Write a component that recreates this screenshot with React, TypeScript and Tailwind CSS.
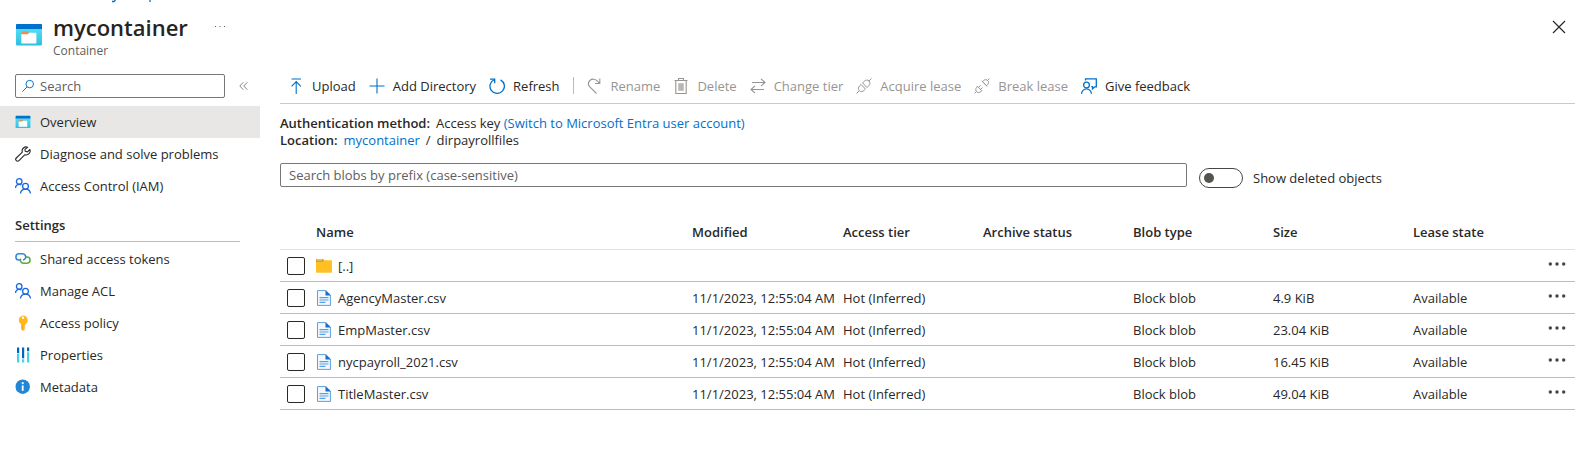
import type { ReactNode } from "react";

type IconProps = { className?: string };

const line = {
  fill: "none",
  stroke: "currentColor",
  strokeWidth: 1.1,
  viewBox: "0 0 16 16",
  "aria-hidden": true,
} as const;

function ContainerIcon({ className }: IconProps) {
  return (
    <svg viewBox="0 0 28 24" className={className} aria-hidden="true">
      <defs>
        <linearGradient id="container-body" x1="0" y1="0" x2="0" y2="1">
          <stop offset="0" stopColor="#50e0f4" />
          <stop offset="1" stopColor="#32bedd" />
        </linearGradient>
      </defs>
      <path d="M1 5h26v16.5a1 1 0 0 1-1 1H2a1 1 0 0 1-1-1z" fill="url(#container-body)" />
      <path d="M1.8 1h24.4a.8.8 0 0 1 .8.8V6H1V1.8a.8.8 0 0 1 .8-.8z" fill="#0072ce" />
      <path d="M7 8.5h5.500l1.500 1.500v2H6.300V9.200a.7.7 0 0 1 .7-.7z" fill="#f58b4c" />
      <path d="M6.300 11.200h6.500l1.500-1.500h6.400a.7.7 0 0 1 .7.7v9.300a.7.7 0 0 1-.7.7H7a.7.7 0 0 1-.7-.7z" fill="#fff" />
    </svg>
  );
}

function SearchIcon({ className }: IconProps) {
  return (
    <svg {...line} className={className}>
      <circle cx="10" cy="5.800" r="4.300" />
      <path d="M7 9 1.500 14.500" />
    </svg>
  );
}

function WrenchIcon({ className }: IconProps) {
  return (
    <svg {...line} className={className} strokeLinejoin="round">
      <path d="M12.600 1.200a4 4 0 0 0-5.300 4.900L1.300 12a1.900 1.900 0 1 0 2.700 2.700l5.900-6a4 4 0 0 0 5-5.200l-2.500 2.400-2.100-.6-.4-1.900z" />
    </svg>
  );
}

function PeopleIcon({ className }: IconProps) {
  return (
    <svg {...line} strokeWidth={1.3} className={className}>
      <circle cx="4.200" cy="3.500" r="2.800" />
      <path d="M.5 10a3.800 3.800 0 0 1 6-3" />
      <circle cx="10.500" cy="8.200" r="2.900" />
      <path d="M5.400 15.500a5.100 5.100 0 0 1 10.100 0" />
    </svg>
  );
}

function LinkIcon({ className }: IconProps) {
  return (
    <svg viewBox="0 0 16 16" fill="none" strokeWidth="1.5" className={className} aria-hidden="true">
      <path d="M10.500 6H12a3.100 3.100 0 0 1 0 6.200H8.500a3.100 3.100 0 0 1-2.800-4.500" stroke="#5ea73a" />
      <path d="M5.500 9H4a3.100 3.100 0 0 1 0-6.200h3.500a3.100 3.100 0 0 1 2.800 4.500c-.4.900-1.200 1.500-2.300 1.600" stroke="#2f86dc" />
    </svg>
  );
}

function KeyIcon({ className }: IconProps) {
  return (
    <svg viewBox="0 0 16 16" className={className} aria-hidden="true">
      <path
        fillRule="evenodd"
        d="M8 .5a4.700 4.700 0 0 1 2.300 8.800v1.200l-1 .9 1 .9-1 1 .8.8L8.400 15.700h-.8L6.300 14.500V9.300A4.700 4.700 0 0 1 8 .5zM8 1.600a1.200 1.200 0 1 0 0 2.400 1.200 1.200 0 0 0 0-2.400z"
        fill="#ffb71b"
      />
      <path d="M7.200 9.500v4.500" stroke="#ff9300" strokeWidth=".8" />
    </svg>
  );
}

function PropertiesIcon({ className }: IconProps) {
  return (
    <svg viewBox="0 0 16 16" className={className} aria-hidden="true">
      <path d="M2 .5h2.200V6H2zM7 .5h2.200v10.800H7zM12 .5h2.200v3.800H12z" fill="#0065c0" />
      <path d="M2 6.600h2.200v9H2zM7 12.300h2.200v3.300H7zM12 5.300h2.200v10.300H12z" fill="#42d3ee" />
    </svg>
  );
}

function InfoIcon({ className }: IconProps) {
  return (
    <svg viewBox="0 0 16 16" className={className} aria-hidden="true">
      <circle cx="7.700" cy="7.700" r="7.200" fill="#1f86d8" />
      <circle cx="7.700" cy="4.200" r="1.100" fill="#fff" />
      <path d="M6.800 6.400h1.800v5.400H6.800z" fill="#fff" />
    </svg>
  );
}

function UploadIcon({ className }: IconProps) {
  return (
    <svg {...line} className={className}>
      <path d="M3.500 1h9.500M8.200 16V3.500M3.600 8.300l4.600-4.700 4.600 4.700" />
    </svg>
  );
}

function PlusIcon({ className }: IconProps) {
  return (
    <svg {...line} className={className}>
      <path d="M8 .5v15M.5 8h15" />
    </svg>
  );
}

function RefreshIcon({ className }: IconProps) {
  return (
    <svg {...line} strokeWidth={1.3} className={className}>
      <path d="M5.500 1.500a7.200 7.200 0 1 0 6 .3" />
      <path d="M1 1.200h4.700v4" />
    </svg>
  );
}

function RenameIcon({ className }: IconProps) {
  return (
    <svg {...line} className={className}>
      <path d="M9.500 15.500 2.600 8.700a4.700 4.700 0 0 1 .3-6.200c2.100-1.900 5.200-1.700 7 .2l2.600 2.500M12.800.5v5H8" />
    </svg>
  );
}

function TrashIcon({ className }: IconProps) {
  return (
    <svg {...line} className={className}>
      <path d="M1.500 2.500h13M5.500 2.500v-2h5v2M2.800 2.500v13h10.400v-13" />
      <path d="M5.200 5.200h5.600v7.600H5.200z" fill="#b9b7b5" stroke="none" />
    </svg>
  );
}

function SwapIcon({ className }: IconProps) {
  return (
    <svg {...line} className={className}>
      <path d="M2 4.500h13M11 .8l4 3.700-4 3.700M14 11.500H1M5 7.800l-4 3.700 4 3.700" />
    </svg>
  );
}

function PlugIcon({ className }: IconProps) {
  return (
    <svg {...line} strokeWidth={1} className={className}>
      <path d="M.5 15.500 3 13M13 3 15.500.5M5 6.500l4.500 4.500-1.300 1.300c-1.400 1.400-3.400 1.800-4.900.4s-1-3.500.4-4.900zM6.500 5l4.500 4.500 1.700-1.700c1.300-1.300 1.700-3.400.3-4.800s-3.500-1.100-4.800.3z" />
    </svg>
  );
}

function UnplugIcon({ className }: IconProps) {
  return (
    <svg {...line} strokeWidth={1} className={className}>
      <path d="M.5 15.500 2.500 13.500M13.500 2.500l2-2M3.300 8.200l4.500 4.500-1 1c-1.200 1.100-2.900 1.200-4.100.1s-1.200-3.200 0-4.300zM4.500 9.400l2-2M6.600 11.500l2-2M8.400 3.500l4.200 4.200.9-.9c1.300-1.300 1.500-3 .3-4.200s-3-1.200-4.300.1zM7.700 2.800l5.600 5.600" />
    </svg>
  );
}

function FeedbackIcon({ className }: IconProps) {
  return (
    <svg {...line} strokeWidth={1.3} className={className}>
      <path d="M4.500 2.500V.8h10.800v8h-1.500l-2.300 2V8.700h-1.200" />
      <circle cx="5.500" cy="7" r="2.900" />
      <path d="M.6 15.800a4.900 4.900 0 0 1 9.800 0" />
    </svg>
  );
}

function FolderIcon({ className }: IconProps) {
  return (
    <svg viewBox="0 0 16 16" className={className} aria-hidden="true">
      <path d="M0 1.700A.7.7 0 0 1 .7 1h6.200L8.400 2.600V5H0z" fill="#df9a25" />
      <path d="M1 2h5" stroke="#f7e2b5" strokeWidth=".9" />
      <path d="M0 4h6.500L8.300 2.300h7a.7.7 0 0 1 .7.7v11a.7.7 0 0 1-.7.7H.7A.7.7 0 0 1 0 14z" fill="#ffc023" />
    </svg>
  );
}

function FileIcon({ className }: IconProps) {
  return (
    <svg viewBox="0 0 16 16" className={className} aria-hidden="true">
      <path d="M1.500.6h8.300L14.400 5v10.400H1.500z" fill="#f3f9ff" stroke="#5a9fe0" />
      <path d="M9.500.2 14.800 5.400H9.500z" fill="#0f6fcb" />
      <path d="M3.500 7.700h9M3.500 10h9M3.500 12.300h6" stroke="#5a9fe0" strokeWidth="1.200" />
    </svg>
  );
}

function DotsIcon({ className }: IconProps) {
  return (
    <svg viewBox="0 0 18 4" fill="currentColor" className={className} aria-hidden="true">
      <circle cx="2.300" cy="2" r="1.700" />
      <circle cx="9" cy="2" r="1.700" />
      <circle cx="15.700" cy="2" r="1.700" />
    </svg>
  );
}

function NavItem({ icon, label, active }: { icon: ReactNode; label: string; active?: boolean }) {
  return (
    <li>
      <a
        href="#"
        aria-current={active ? "page" : undefined}
        className={`flex h-8 items-center gap-[9px] pl-[15px] ${active ? "bg-[#e8e7e6]" : ""}`}
      >
        {icon}
        {label}
      </a>
    </li>
  );
}

function Command({ icon, label, disabled }: { icon: ReactNode; label: string; disabled?: boolean }) {
  return (
    <button type="button" disabled={disabled} className="flex items-center gap-2 text-[#292827] disabled:text-[#979593]">
      <span className={disabled ? "text-[#979593]" : "text-[#0070c9]"}>{icon}</span>
      {label}
    </button>
  );
}

const files = [
  { name: "AgencyMaster.csv", size: "4.9 KiB" },
  { name: "EmpMaster.csv", size: "23.04 KiB" },
  { name: "nycpayroll_2021.csv", size: "16.45 KiB" },
  { name: "TitleMaster.csv", size: "49.04 KiB" },
];

function NameCell({ icon, name }: { icon: ReactNode; name: string }) {
  return (
    <td>
      <a href="#" className="flex items-center gap-1.5">
        {icon}
        {name}
      </a>
    </td>
  );
}

function SelectCell({ name }: { name: string }) {
  return (
    <td className="pl-[7px]">
      <input
        type="checkbox"
        aria-label={`Select ${name}`}
        className="block size-[18px] appearance-none rounded-xs border border-[#292827] bg-white checked:bg-[#0070c9]"
      />
    </td>
  );
}

function MenuCell({ name }: { name: string }) {
  return (
    <td>
      <button type="button" aria-label={`Actions for ${name}`} className="mr-[9px] mb-1 ml-auto block text-[#484644]">
        <DotsIcon className="h-1 w-[18px]" />
      </button>
    </td>
  );
}

export default function App() {
  return (
    <div className="bg-white font-['Open_Sans','Noto_Sans',sans-serif] text-[13px] leading-[18px] text-[#292827]">
      <header className="flex h-[74px] items-start pr-[23px] pl-[15px]">
        <ContainerIcon className="mt-[23px] h-6 w-7 shrink-0" />
        <div className="pl-2.5">
          <svg viewBox="0 0 48 3" className="mb-2 ml-[58px] h-[3px] w-12" aria-hidden="true">
            <path d="M4.500 0 3 1.500H1M39 0v2" stroke="#0070c9" strokeWidth="1.300" fill="none" />
          </svg>
          <h1 className="text-[22px] leading-8 font-semibold text-[#252423]">mycontainer</h1>
          <p className="text-xs leading-4 text-[#605e5c]">Container</p>
        </div>
        <button type="button" aria-label="More options" className="mt-[25px] ml-[26px] text-[#605e5c]">
          <svg viewBox="0 0 12 3" fill="currentColor" className="h-[3px] w-3" aria-hidden="true">
            <path d="M1 1h1v1H1zM5.500 1h1v1h-1zM10 1h1v1h-1z" />
          </svg>
        </button>
        <button type="button" aria-label="Close" className="mt-5 ml-auto">
          <svg viewBox="0 0 14 14" fill="none" stroke="currentColor" strokeWidth="1.200" className="h-3.5 w-3.5" aria-hidden="true">
            <path d="m1 1 12 12M13 1 1 13" />
          </svg>
        </button>
      </header>

      <div className="flex items-start">
        <nav aria-label="Resource" className="w-[260px] shrink-0">
          <div className="flex items-center gap-[14px] pl-[15px]">
            <div className="flex h-6 w-[210px] items-center gap-[5px] rounded-xs border border-[#797775] pl-[5px]">
              <SearchIcon className="size-3.5 shrink-0 text-[#0070c9]" />
              <input
                type="text"
                aria-label="Search menu"
                placeholder="Search"
                className="w-full min-w-0 bg-transparent outline-none placeholder:text-[#605e5c]"
              />
            </div>
            <button type="button" aria-label="Collapse menu" className="text-[#797775]">
              <svg viewBox="0 0 9 8" fill="none" stroke="currentColor" strokeWidth=".9" className="h-2 w-[9px]" aria-hidden="true">
                <path d="M4.300.3.8 4l3.500 3.700M8.300.3 4.800 4l3.500 3.700" />
              </svg>
            </button>
          </div>
          <ul className="mt-2">
            <NavItem active icon={<ContainerIcon className="size-4" />} label="Overview" />
            <NavItem icon={<WrenchIcon className="size-4" />} label="Diagnose and solve problems" />
            <NavItem icon={<PeopleIcon className="size-4 text-[#1769dc]" />} label="Access Control (IAM)" />
          </ul>
          <h2 className="mr-5 ml-[15px] border-b border-[#bebbb8] pt-3.5 pb-[7px] font-semibold">Settings</h2>
          <ul className="pt-px">
            <NavItem icon={<LinkIcon className="size-4" />} label="Shared access tokens" />
            <NavItem icon={<PeopleIcon className="size-4 text-[#1769dc]" />} label="Manage ACL" />
            <NavItem icon={<KeyIcon className="size-4" />} label="Access policy" />
            <NavItem icon={<PropertiesIcon className="size-4" />} label="Properties" />
            <NavItem icon={<InfoIcon className="size-4" />} label="Metadata" />
          </ul>
        </nav>

        <main className="min-w-0 flex-1 pr-3.5 pl-5">
          <div role="toolbar" aria-label="Container commands" className="flex h-[30px] items-center gap-[13px] border-b border-[#cccac8] pb-1.5 pl-2">
            <Command icon={<UploadIcon className="size-4" />} label="Upload" />
            <Command icon={<PlusIcon className="size-4" />} label="Add Directory" />
            <Command icon={<RefreshIcon className="size-4" />} label="Refresh" />
            <span className="h-[17px] w-px bg-[#bebbb8]" />
            <Command disabled icon={<RenameIcon className="size-4" />} label="Rename" />
            <Command disabled icon={<TrashIcon className="size-4" />} label="Delete" />
            <Command disabled icon={<SwapIcon className="size-4" />} label="Change tier" />
            <Command disabled icon={<PlugIcon className="size-4" />} label="Acquire lease" />
            <Command disabled icon={<UnplugIcon className="size-4" />} label="Break lease" />
            <Command icon={<FeedbackIcon className="size-4" />} label="Give feedback" />
          </div>

          <div className="pt-[11px] leading-[17px]">
            <p className="flex gap-1.5">
              <strong className="font-semibold">Authentication method:</strong>
              <span>
                Access key{" "}
                <a href="#" className="text-[#0070c9]">(Switch to Microsoft Entra user account)</a>
              </span>
            </p>
            <p className="flex gap-1.5">
              <strong className="font-semibold">Location:</strong>
              <a href="#" className="text-[#0070c9]">mycontainer</a>
              <span>/</span>
              <span>dirpayrollfiles</span>
            </p>
          </div>

          <div className="mt-3.5 flex items-start gap-3">
            <input
              type="text"
              aria-label="Search blobs by prefix"
              placeholder="Search blobs by prefix (case-sensitive)"
              className="h-6 min-w-0 flex-1 rounded-xs border border-[#797775] px-2 outline-none placeholder:text-[#605e5c]"
            />
            <label className="mt-[5px] flex w-[376px] shrink-0 items-center gap-2.5">
              <input
                type="checkbox"
                role="switch"
                className="flex h-5 w-11 appearance-none items-center rounded-full border border-[#484644] px-1 before:size-2.5 before:rounded-full before:bg-[#55534f] checked:justify-end"
              />
              Show deleted objects
            </label>
          </div>

          <table className="mt-[26px] w-full table-fixed border-collapse text-left">
            <colgroup>
              <col className="w-9" />
              <col />
              <col className="w-[151px]" />
              <col className="w-[140px]" />
              <col className="w-[150px]" />
              <col className="w-[140px]" />
              <col className="w-[140px]" />
              <col className="w-[122px]" />
              <col className="w-10" />
            </colgroup>
            <thead>
              <tr className="h-[35px] border-b border-[#e4e2e0] *:pt-px *:font-semibold">
                <th aria-label="Select" />
                <th>Name</th>
                <th>Modified</th>
                <th>Access tier</th>
                <th>Archive status</th>
                <th>Blob type</th>
                <th>Size</th>
                <th>Lease state</th>
                <th aria-label="Actions" />
              </tr>
            </thead>
            <tbody>
              <tr className="h-8 border-b border-[#bebbb8] *:pt-0.5">
                <SelectCell name="parent folder" />
                <NameCell icon={<FolderIcon className="size-4" />} name="[..]" />
                <td colSpan={6} />
                <MenuCell name="parent folder" />
              </tr>
              {files.map((file) => (
                <tr key={file.name} className="h-8 border-b border-[#bebbb8] whitespace-nowrap *:pt-0.5">
                  <SelectCell name={file.name} />
                  <NameCell icon={<FileIcon className="size-4" />} name={file.name} />
                  <td>11/1/2023, 12:55:04 AM</td>
                  <td>Hot (Inferred)</td>
                  <td />
                  <td>Block blob</td>
                  <td>{file.size}</td>
                  <td>Available</td>
                  <MenuCell name={file.name} />
                </tr>
              ))}
            </tbody>
          </table>
        </main>
      </div>
    </div>
  );
}
